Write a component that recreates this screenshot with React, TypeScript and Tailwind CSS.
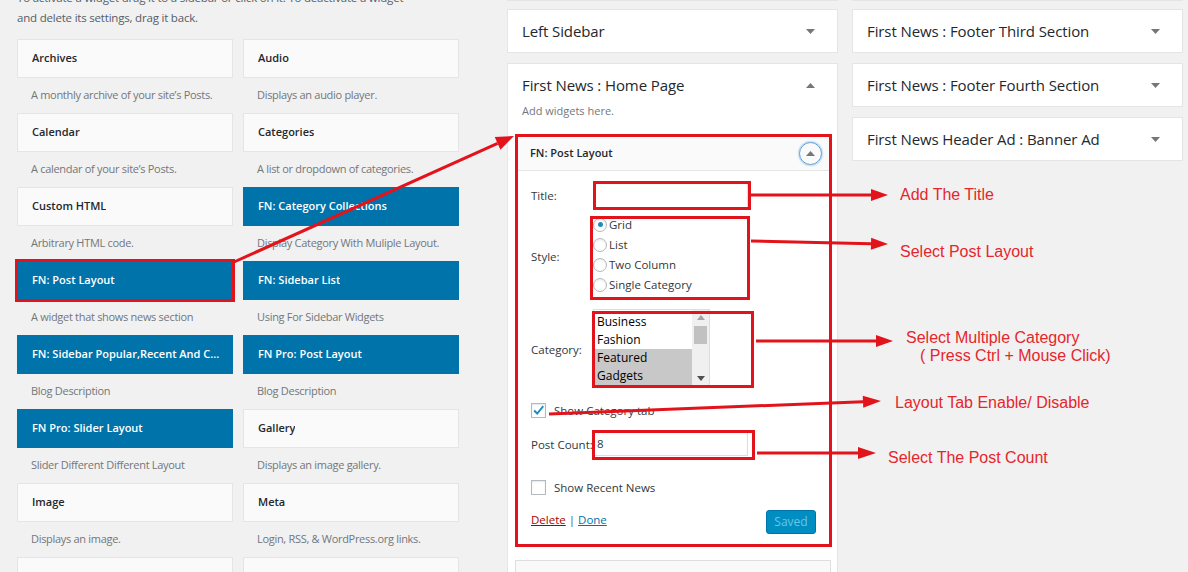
import React from 'react';

type Widget = { title: string; desc: string; fn?: boolean; mark?: boolean };

const widgets: Widget[] = [
    { title: 'Archives', desc: "A monthly archive of your site’s Posts." },
    { title: 'Audio', desc: 'Displays an audio player.' },
    { title: 'Calendar', desc: "A calendar of your site’s Posts." },
    { title: 'Categories', desc: 'A list or dropdown of categories.' },
    { title: 'Custom HTML', desc: 'Arbitrary HTML code.' },
    { title: 'FN: Category Collections', desc: 'Display Category With Muliple Layout.', fn: true },
    { title: 'FN: Post Layout', desc: 'A widget that shows news section', fn: true, mark: true },
    { title: 'FN: Sidebar List', desc: 'Using For Sidebar Widgets', fn: true },
    { title: 'FN: Sidebar Popular,Recent And Comments', desc: 'Blog Description', fn: true },
    { title: 'FN Pro: Post Layout', desc: 'Blog Description', fn: true },
    { title: 'FN Pro: Slider Layout', desc: 'Slider Different Different Layout', fn: true },
    { title: 'Gallery', desc: 'Displays an image gallery.' },
    { title: 'Image', desc: 'Displays an image.' },
    { title: 'Meta', desc: 'Login, RSS, & WordPress.org links.' },
    { title: 'Navigation Menu', desc: 'Add a navigation menu to your sidebar.' },
    { title: 'Pages', desc: 'A list of your site’s Pages.' },
];

const RED = '#e3131b';

function Caret({ up }: { up?: boolean }) {
    return (
        <svg width="9" height="5" viewBox="0 0 9 5" className="shrink-0">
            <path d={up ? 'M0 5h9L4.5 0z' : 'M0 0h9L4.5 5z'} fill="#72777c" />
        </svg>
    );
}

function SidebarBox({ title }: { title: string }) {
    return (
        <div className="flex h-[44px] items-center justify-between border border-[#e5e5e5] bg-white pl-[14px] pr-[22px]">
            <span className="text-[15px] tracking-[-0.1px] text-[#23282d]">{title}</span>
            <Caret />
        </div>
    );
}

function Checkbox({ checked, label }: { checked?: boolean; label: string }) {
    return (
        <div className="flex h-[15px] items-center leading-[15px]">
            <span className="flex h-[15px] w-[15px] items-center justify-center border border-[#b4b9be] bg-white shadow-[inset_0_1px_2px_rgba(0,0,0,0.1)]">
                {checked && (
                    <svg width="15" height="15" viewBox="0 0 15 15">
                        <path d="M2.5 7.5 L6 11 L13 2.5" fill="none" stroke="#1e8cbe" strokeWidth="2.2" />
                    </svg>
                )}
            </span>
            <span className="ml-[8px]">{label}</span>
        </div>
    );
}

function Radio({ checked, label }: { checked?: boolean; label: string }) {
    return (
        <div className="flex h-[20px] items-center">
            <span className="flex h-[14px] w-[14px] items-center justify-center rounded-full border border-[#b4b9be] bg-white shadow-[inset_0_1px_2px_rgba(0,0,0,0.1)]">
                {checked && <span className="h-[5px] w-[5px] rounded-full bg-[#1e8cbe]" />}
            </span>
            <span className="ml-[2px] pt-[1px]">{label}</span>
        </div>
    );
}

function Box({ className }: { className: string }) {
    return <div className={`pointer-events-none absolute border-[3px] border-[#e3131b] ${className}`} />;
}

function arrowHead(x1: number, y1: number, x2: number, y2: number, len: number, half: number) {
    const d = Math.hypot(x2 - x1, y2 - y1);
    const ux = (x2 - x1) / d;
    const uy = (y2 - y1) / d;
    const bx = x2 - ux * len;
    const by = y2 - uy * len;
    const pts = `${x2},${y2} ${bx - uy * half},${by + ux * half} ${bx + uy * half},${by - ux * half}`;
    return { bx, by, pts };
}

const arrows = [
    [234, 262, 514, 136, 18, 7],
    [751, 195, 888, 195, 17, 6],
    [751, 241, 888, 244, 17, 6],
    [756, 341, 893, 341, 17, 6],
    [549, 414, 881, 401, 18, 6],
    [757, 453, 876, 453, 18, 6],
];

const notes = [
    { text: 'Add The Title', x: 900, y: 195 },
    { text: 'Select Post Layout', x: 900, y: 252 },
    { text: 'Select Multiple Category', x: 906, y: 338 },
    { text: '( Press Ctrl + Mouse Click)', x: 920, y: 356 },
    { text: 'Layout Tab Enable/ Disable', x: 895, y: 403 },
    { text: 'Select The Post Count', x: 888, y: 458 },
];

function Annotations() {
    return (
        <div className="pointer-events-none absolute inset-0">
            <svg width="1188" height="572" className="absolute left-0 top-0">
                {arrows.map(([x1, y1, x2, y2, len, half], i) => {
                    const h = arrowHead(x1, y1, x2, y2, len, half);
                    return (
                        <g key={i}>
                            <line x1={x1} y1={y1} x2={h.bx} y2={h.by} stroke={RED} strokeWidth="3" />
                            <polygon points={h.pts} fill={RED} />
                        </g>
                    );
                })}
            </svg>
            {notes.map((n) => (
                <div
                    key={n.text}
                    className="absolute whitespace-pre font-['Liberation_Sans',Arial,sans-serif] text-[16px] leading-[18px] text-[#e5262d]"
                    style={{ left: n.x, top: n.y - 9 }}
                >
                    {n.text}
                </div>
            ))}
        </div>
    );
}

export default function App() {
    return (
        <div className="relative h-[572px] w-[1188px] overflow-hidden bg-[#f1f1f1] font-['Open_Sans','Noto_Sans',sans-serif] text-[13px] text-[#32373c]">
            <div className="flex items-start">
                {/* available widgets */}
                <div className="ml-[17px] w-[442px]">
                    <p className="-mt-[12px] whitespace-nowrap text-[11.5px] leading-[19.5px] tracking-[-0.2px] text-[#555d66]">
                        To activate a widget drag it to a sidebar or click on it. To deactivate a widget
                        <br />
                        and delete its settings, drag it back.
                    </p>
                    <div className="mt-[12px] grid grid-cols-2 gap-x-[10px]">
                        {widgets.map((w) => (
                            <div key={w.title}>
                                <div
                                    className={`flex h-[39px] items-center border pl-[14px] pr-[10px] text-[11px] font-semibold ${
                                        w.fn ? 'border-[#0073aa] bg-[#0073aa] text-white' : 'border-[#e5e5e5] bg-[#fafafa] text-[#23282d]'
                                    } ${w.mark ? 'outline-[3px] outline-offset-[-1px] outline-[#e3131b]' : ''}`}
                                >
                                    <span className="truncate">{w.title}</span>
                                </div>
                                <div className="flex h-[35px] items-center truncate pl-[14px] text-[11px] tracking-[-0.3px] text-[#72777c]">{w.desc}</div>
                            </div>
                        ))}
                    </div>
                </div>

                {/* middle sidebars */}
                <div className="ml-[48px] w-[331px]">
                    <div className="h-px bg-[#e5e5e5]" />
                    <div className="mt-[8px]">
                        <SidebarBox title="Left Sidebar" />
                    </div>
                    <div className="mt-[10px] h-[520px] border border-[#e5e5e5] bg-white">
                        <div className="flex items-center justify-between pl-[14px] pr-[22px] pt-[10px]">
                            <span className="text-[15px] leading-[22px] tracking-[-0.1px] text-[#23282d]">First News : Home Page</span>
                            <Caret up />
                        </div>
                        <p className="mt-[5px] pl-[14px] text-[11px] leading-[19.5px] text-[#72777c]">Add widgets here.</p>

                        <div className="ml-[7px] mr-[5px] mt-[13px] border-[3px] border-[#e3131b] bg-white text-[11.5px]">
                            <div className="flex h-[34px] items-center justify-between border-b border-[#e5e5e5] bg-[#fafafa] pl-[12px] pr-[7px]">
                                <span className="text-[11px] font-semibold text-[#23282d]">FN: Post Layout</span>
                                <span className="flex h-[23px] w-[23px] items-center justify-center rounded-full border border-[#5b9dd9] shadow-[0_0_2px_rgba(30,140,190,0.8)]">
                                    <Caret up />
                                </span>
                            </div>
                            <div className="px-[13px] pb-[10px] pt-[11px]">
                                {/* title */}
                                <div className="flex items-center">
                                    <span className="w-[62px] pt-[2px]">Title:</span>
                                    <div className="relative">
                                        <div className="h-[27px] w-[155px] border border-[#ddd] bg-white shadow-[inset_0_1px_2px_rgba(0,0,0,0.07)]" />
                                        <Box className="-bottom-[1px] -right-[3px] -top-[1px] left-0" />
                                    </div>
                                </div>
                                {/* style */}
                                <div className="mt-[6px] flex items-center">
                                    <span className="w-[62px] pt-[4px]">Style:</span>
                                    <div className="relative w-[157px]">
                                        <Radio checked label="Grid" />
                                        <Radio label="List" />
                                        <Radio label="Two Column" />
                                        <Radio label="Single Category" />
                                        <Box className="-bottom-[5px] -left-[3px] right-0 top-[1px]" />
                                    </div>
                                </div>
                                {/* category */}
                                <div className="mt-[14px] flex items-center">
                                    <span className="w-[62px] pt-[5px]">Category:</span>
                                    <div className="relative">
                                        <div className="flex h-[78px] w-[117px] border border-[#ddd] bg-white">
                                            <div className="flex-1 pt-[3px] text-[12px] leading-[18px] text-[#000]">
                                                <div className="h-[18px] pl-[3px]">Business</div>
                                                <div className="h-[18px] pl-[3px]">Fashion</div>
                                                <div className="h-[18px] bg-[#c8c8c8] pl-[3px]">Featured</div>
                                                <div className="h-[18px] bg-[#c8c8c8] pl-[3px]">Gadgets</div>
                                            </div>
                                            <div className="flex w-[17px] flex-col items-center bg-[#f0f0f0]">
                                                <svg width="8" height="5" viewBox="0 0 8 5" className="mt-[5px]">
                                                    <path d="M0 5h8L4 0z" fill="#a3a3a3" />
                                                </svg>
                                                <div className="mt-[6px] h-[18px] w-[13px] bg-[#c1c1c1]" />
                                                <svg width="8" height="5" viewBox="0 0 8 5" className="mt-auto mb-[5px]">
                                                    <path d="M0 0h8L4 5z" fill="#505050" />
                                                </svg>
                                            </div>
                                        </div>
                                        <Box className="-bottom-[1px] -left-[1px] -right-[44px] top-[2px]" />
                                    </div>
                                </div>
                                {/* show category tab */}
                                <div className="mt-[16px]">
                                    <Checkbox checked label="Show Category tab" />
                                </div>
                                {/* post count */}
                                <div className="mt-[13px] flex items-center">
                                    <span className="w-[62px] whitespace-nowrap pt-[3px]">Post Count:</span>
                                    <div className="relative">
                                        <div className="flex h-[25px] w-[155px] items-center border border-[#ddd] bg-white pl-[3px] pt-[1px] shadow-[inset_0_1px_2px_rgba(0,0,0,0.07)]">
                                            8
                                        </div>
                                        <Box className="-bottom-[4px] -left-[1px] -right-[7px] -top-[1px]" />
                                    </div>
                                </div>
                                {/* recent news */}
                                <div className="mt-[24px]">
                                    <Checkbox label="Show Recent News" />
                                </div>
                                {/* actions */}
                                <div className="mt-[15px] flex items-center justify-between">
                                    <div className="-mt-[4px]">
                                        <a className="text-[#a00] underline">Delete</a>
                                        <span className="text-[#555]"> | </span>
                                        <a className="text-[#0073aa] underline">Done</a>
                                    </div>
                                    <button className="h-[24px] w-[50px] rounded-[3px] border border-[#0073aa] bg-[#008ec2] text-[12px] text-[#66c6e4]">
                                        Saved
                                    </button>
                                </div>
                            </div>
                        </div>

                        <div className="ml-[7px] mr-[6px] mt-[13px] h-[40px] border border-[#dfdfdf] bg-[#f9f9f9]" />
                    </div>
                </div>

                {/* right sidebars */}
                <div className="ml-[14px] w-[331px]">
                    <div className="h-px bg-[#e5e5e5]" />
                    <div className="mt-[8px] flex flex-col gap-[10px]">
                        <SidebarBox title="First News : Footer Third Section" />
                        <SidebarBox title="First News : Footer Fourth Section" />
                        <SidebarBox title="First News Header Ad : Banner Ad" />
                    </div>
                </div>
            </div>
            <Annotations />
        </div>
    );
}
